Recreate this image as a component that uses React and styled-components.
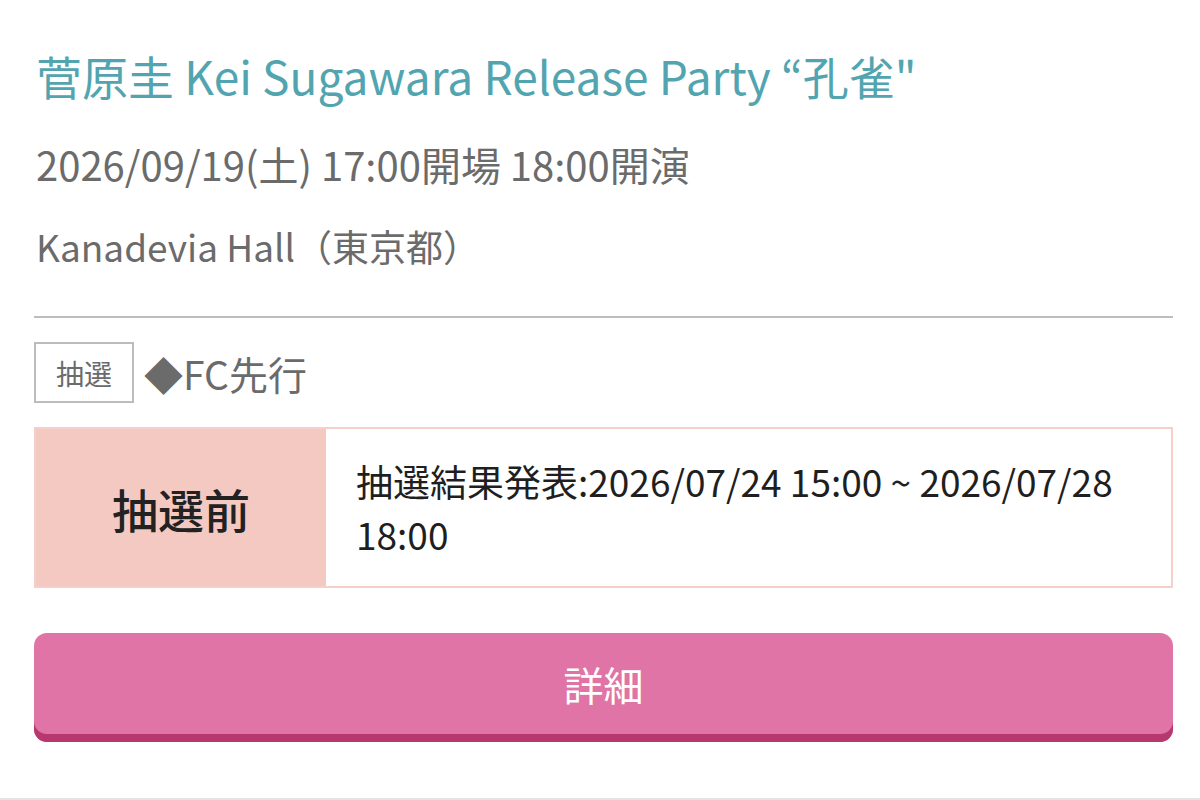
import React from "react";
import styled, { createGlobalStyle } from "styled-components";

const GlobalStyle = createGlobalStyle`
  html, body {
    margin: 0;
    padding: 0;
    background: #ffffff;
  }
  body {
    font-family: "Noto Sans CJK JP", "Noto Sans", sans-serif;
  }
`;

const Page = styled.div`
  width: 1200px;
  height: 800px;
  box-sizing: border-box;
  border-bottom: 2px solid #e4e4e4;
  overflow: hidden;
`;

const Card = styled.section`
  padding: 52px 27px 0 34px;
  display: flex;
  flex-direction: column;
`;

const Title = styled.h1`
  margin: 0 0 0 2px;
  font-size: 46px;
  line-height: 46px;
  font-weight: 400;
  color: #52a5b0;
  white-space: nowrap;
`;

const Meta = styled.p`
  margin: ${(p) => p.$top}px 0 0 2px;
  font-size: ${(p) => p.$size}px;
  line-height: ${(p) => p.$size}px;
  font-weight: 400;
  color: #6b6b6b;
  white-space: nowrap;
`;

const Rule = styled.hr`
  margin: 51px 0 0;
  border: 0;
  height: 2px;
  background: #bdbdbd;
`;

const EntryHead = styled.div`
  margin-top: 24px;
  display: flex;
  align-items: center;
  gap: 10px;
`;

const Badge = styled.span`
  box-sizing: border-box;
  width: 100px;
  height: 61px;
  border: 2px solid #bcbcbc;
  display: flex;
  align-items: center;
  justify-content: center;
  font-size: 28px;
  color: #6b6b6b;
`;

const EntryName = styled.span`
  font-size: 39px;
  color: #6b6b6b;
  font-weight: 400;
`;

const Status = styled.div`
  margin-top: 24px;
  display: grid;
  grid-template-columns: 290px 1fr;
  height: 161px;
  box-sizing: border-box;
  border: 2px solid #f5cfca;
`;

const StatusLabel = styled.div`
  background: #f4c9c2;
  display: flex;
  align-items: center;
  justify-content: center;
  font-size: 46px;
  font-weight: 500;
  color: #222222;
`;

const StatusText = styled.div`
  background: #ffffff;
  padding: 0 28px 0 30px;
  display: flex;
  align-items: center;
  font-size: 37px;
  line-height: 53px;
  font-weight: 400;
  color: #1f1f1f;
`;

const DetailButton = styled.button`
  margin-top: 45px;
  height: 109px;
  border: 0;
  border-radius: 13px;
  background: #e074a6;
  box-shadow: inset 0 -8px 0 #b6386e;
  color: #ffffff;
  font-family: inherit;
  font-size: 40px;
  font-weight: 400;
  padding: 0 0 8px;
  cursor: pointer;
`;

export default function App() {
  return (
    <>
      <GlobalStyle />
      <Page>
        <Card>
          <Title>菅原圭 Kei Sugawara Release Party “孔雀"</Title>
          <Meta $top={46} $size={40}>
            2026/09/19(土) 17:00開場 18:00開演
          </Meta>
          <Meta $top={44} $size={37}>
            Kanadevia Hall（東京都）
          </Meta>
          <Rule />
          <EntryHead>
            <Badge>抽選</Badge>
            <EntryName>◆FC先行</EntryName>
          </EntryHead>
          <Status>
            <StatusLabel>抽選前</StatusLabel>
            <StatusText>
              抽選結果発表:2026/07/24 15:00 ~ 2026/07/28 18:00
            </StatusText>
          </Status>
          <DetailButton>詳細</DetailButton>
        </Card>
      </Page>
    </>
  );
}
